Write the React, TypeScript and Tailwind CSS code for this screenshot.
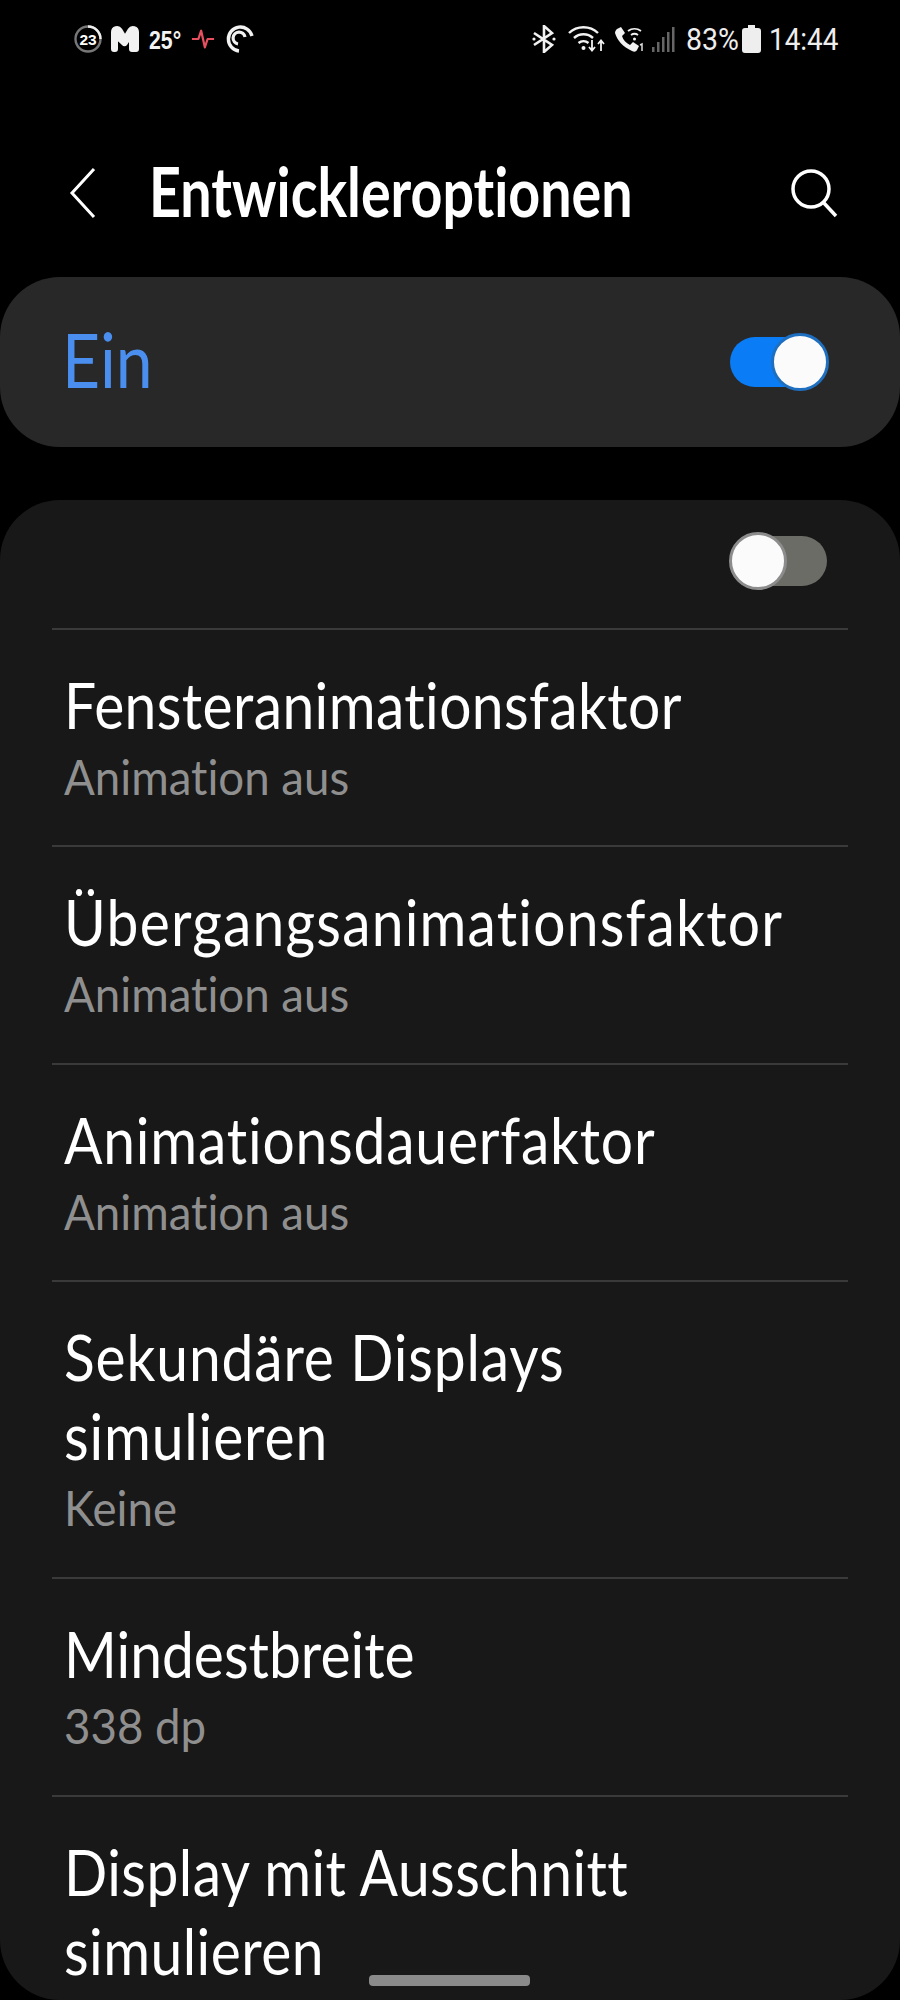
const font = { fontFamily: '"Lato", "Noto Sans", sans-serif' };

function StatusLeft() {
  return (
    <div className="flex items-center">
      <svg width="30" height="30" viewBox="0 0 30 30" className="ml-[73px]">
        <circle cx="15" cy="15" r="12.5" fill="none" stroke="#777" strokeWidth="2.4" />
        <path d="M15 2.5A12.5 12.5 0 0 1 27.5 15" fill="none" stroke="#eee" strokeWidth="2.4" />
        <text x="15" y="20.500" textAnchor="middle" fontSize="15.500" fontWeight="700" fill="#fff" fontFamily="Liberation Sans">23</text>
      </svg>
      <svg width="30" height="28" viewBox="0 0 30 28" className="ml-[7px]">
        <path d="M1 7a6 6 0 0 1 11-3.2l3 5 3-5A6 6 0 0 1 29 7v17a3 3 0 0 1-3 3h-4a3 3 0 0 1-3-3v-7l-2 3a3 3 0 0 1-5 0L5 13.5 8 14v10a3 3 0 0 1-3 3H4a3 3 0 0 1-3-3z" fill="#f2f2f2" />
      </svg>
      <span className="ml-[9px] mt-[2px] w-[34px] origin-left scale-x-[0.85] text-[25px] font-bold leading-none text-[#f2f2f2]" style={{ fontFamily: '"Liberation Sans", sans-serif' }}>25°</span>
      <svg width="24" height="24" viewBox="0 0 26 24" className="ml-[8px]">
        <path d="M1 12h7l3-9 4 18 3-9h7" fill="none" stroke="#e8505f" strokeWidth="2.4" strokeLinejoin="round" />
      </svg>
      <svg width="30" height="30" viewBox="0 0 30 30" className="ml-[10px]">
        <path d="M14 27A12 12 0 1 1 27 12" fill="none" stroke="#f2f2f2" strokeWidth="3.4" />
        <path d="M13 20a6 6 0 1 1 7-7" fill="none" stroke="#f2f2f2" strokeWidth="3.2" />
      </svg>
    </div>
  );
}

function StatusRight() {
  return (
    <div className="mr-[63px] flex items-center">
      <svg width="24" height="28" viewBox="0 0 24 28">
        <path d="M2 8l18 12-8 7V1l8 7L2 20" fill="none" stroke="#f2f2f2" strokeWidth="2.6" />
        <circle cx="2" cy="14" r="1.6" fill="#f2f2f2" />
        <circle cx="22" cy="14" r="1.6" fill="#f2f2f2" />
      </svg>
      <svg width="38" height="30" viewBox="0 0 38 30" className="ml-[12px]">
        <path d="M1 9a21 21 0 0 1 29 0M6 14a14 14 0 0 1 19 0M10.500 19a8 8 0 0 1 10 0" fill="none" stroke="#f2f2f2" strokeWidth="2.4" />
        <circle cx="15.500" cy="24" r="2" fill="#f2f2f2" />
        <path d="M24 16v10M21 23l3 3.500 3-3.500M33 27V17M30 20l3-3.500 3 3.500" fill="none" stroke="#f2f2f2" strokeWidth="1.800" />
      </svg>
      <svg width="30" height="28" viewBox="0 0 30 28" className="ml-[8px]">
        <path d="M3 4l4-2 4 6-3 3c1 4 4 7 8 9l3-3 6 4-2 4c-1 2-3 2-5 1C9 22 3 15 1 8c0-2 1-3 2-4z" fill="#f2f2f2" />
        <path d="M14 6a11 11 0 0 1 13 0M17 10a6 6 0 0 1 7 0" fill="none" stroke="#f2f2f2" strokeWidth="1.800" />
        <circle cx="20.500" cy="14" r="1.500" fill="#f2f2f2" />
        <path d="M26 20l2-1v7" fill="none" stroke="#ddd" strokeWidth="1.500" />
      </svg>
      <svg width="24" height="26" viewBox="0 0 24 26" className="ml-[8px]">
        <rect x="0" y="21" width="2.500" height="5" fill="#666" />
        <rect x="5" y="16" width="2.500" height="10" fill="#666" />
        <rect x="10" y="11" width="2.500" height="15" fill="#666" />
        <rect x="15" y="6" width="2.500" height="20" fill="#666" />
        <rect x="20" y="1" width="2.500" height="25" fill="#666" />
      </svg>
      <span className="ml-[10px] w-[54px] origin-left scale-x-[0.92] text-[31px] leading-none text-[#eeeeee]" style={{ fontFamily: '"Roboto", sans-serif' }}>83%</span>
      <svg width="19" height="28" viewBox="0 0 19 28" className="ml-[2px]">
        <path d="M6 0h7v3h3a3 3 0 0 1 3 3v19a3 3 0 0 1-3 3H3a3 3 0 0 1-3-3V6a3 3 0 0 1 3-3h3z" fill="#eeeeee" />
      </svg>
      <span className="ml-[8px] w-[68px] origin-left scale-x-[0.9] text-[31px] leading-none text-[#eeeeee]" style={{ fontFamily: '"Roboto", sans-serif' }}>14:44</span>
    </div>
  );
}

function Toggle({ on }: { on: boolean }) {
  return (
    <div className={`flex h-[50px] w-[97px] items-center rounded-full ${on ? 'justify-end bg-[#0a7cf5]' : 'justify-start bg-[#6b6c66]'}`}>
      <div className={`h-[58px] w-[58px] shrink-0 rounded-full border-[3px] bg-[#fbfbfb] ${on ? 'mr-[-2px] border-[#1f6fc0]' : 'ml-[-1px] border-[#8c8c8c]'}`} />
    </div>
  );
}

// tracking differs per row, the original font is not evenly narrower than Lato
function Row({ title, sub, tracking }: { title: string[]; sub?: string; tracking?: string }) {
  return (
    <div className="px-[64px] pt-[35px] [font-variant-ligatures:none]">
      {title.map(t => (
        <div key={t} className={`h-[79px] origin-left scale-x-[0.89] whitespace-nowrap text-[64px] leading-[79px] text-white ${tracking ?? ''}`}>{t}</div>
      ))}
      {sub && <div className="mt-[5px] h-[56px] origin-left scale-x-[0.95] whitespace-nowrap text-[48px] leading-[56px] text-[#8f8f8f]">{sub}</div>}
    </div>
  );
}

function Divider() {
  return <div className="mx-[52px] h-[2px] bg-[#3a3a3a]" />;
}

export default function App() {
  return (
    <div className="relative flex h-[2000px] w-[900px] flex-col overflow-hidden bg-black" style={font}>
      <div className="flex h-[78px] shrink-0 items-center justify-between">
        <StatusLeft />
        <StatusRight />
      </div>
      <div className="flex h-[199px] shrink-0 items-center justify-between pt-[30px]">
        <div className="flex items-center">
          <svg width="30" height="52" viewBox="0 0 30 52" className="ml-[68px]">
            <path d="M26 2L4 26l22 24" fill="none" stroke="#fff" strokeWidth="3" />
          </svg>
          <h1 className="ml-[51px] mt-[-4px] origin-left scale-x-[0.817] whitespace-nowrap text-[68px] font-bold leading-none text-white [font-variant-ligatures:none]">Entwickleroptionen</h1>
        </div>
        <svg width="50" height="50" viewBox="0 0 50 50" className="mr-[60px]">
          <circle cx="21" cy="21" r="18" fill="none" stroke="#fff" strokeWidth="3.500" />
          <path d="M33 34l13 14" stroke="#fff" strokeWidth="3.500" />
        </svg>
      </div>
      <div className="flex h-[170px] shrink-0 items-center justify-between rounded-[60px] bg-[#282828] pl-[62px] pr-[73px]">
        <span className="mt-[-5px] origin-left scale-x-[0.88] text-[75px] leading-none text-[#4a8ff0]">Ein</span>
        <Toggle on />
      </div>
      <div className="mt-[53px] flex h-[1500px] shrink-0 flex-col overflow-hidden rounded-[60px] bg-[#181818]">
        <div className="flex h-[128px] shrink-0 justify-end pr-[73px] pt-[36px]">
          <Toggle on={false} />
        </div>
        <Divider />
        <div className="h-[215px]"><Row title={['Fensteranimationsfaktor']} sub="Animation aus" tracking="tracking-[0.45px]" /></div>
        <Divider />
        <div className="h-[216px]"><Row title={['Übergangsanimationsfaktor']} sub="Animation aus" tracking="tracking-[1.35px]" /></div>
        <Divider />
        <div className="h-[215px]"><Row title={['Animationsdauerfaktor']} sub="Animation aus" tracking="tracking-[0.9px]" /></div>
        <Divider />
        <div className="h-[295px]"><Row title={['Sekundäre Displays', 'simulieren']} sub="Keine" tracking="tracking-[0.95px]" /></div>
        <Divider />
        <div className="h-[216px]"><Row title={['Mindestbreite']} sub="338 dp" /></div>
        <Divider />
        <Row title={['Display mit Ausschnitt', 'simulieren']} tracking="tracking-[0.5px]" />
      </div>
      <div className="absolute left-[369px] top-[1975px] h-[11px] w-[161px] rounded-[4px] bg-[#8a8a8a]" />
    </div>
  );
}
